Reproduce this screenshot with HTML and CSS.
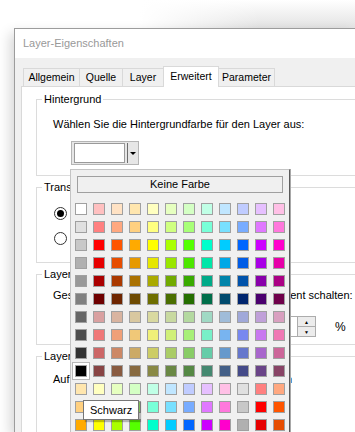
FILE: index.html
```html
<!DOCTYPE html>
<html lang="de">
<head>
    <meta charset="UTF-8">
    <meta name="viewport" content="width=device-width, initial-scale=1.0">
    <title>Layer-Eigenschaften</title>
    <link rel="stylesheet" href="styles.css">
</head>
<body>
    <div class="desk">
        <div class="window">
            <div class="titlebar">Layer-Eigenschaften</div>
            <div class="client">
                <div class="tabs">
                    <div class="tab">Allgemein</div>
                    <div class="tab">Quelle</div>
                    <div class="tab">Layer</div>
                    <div class="tab active">Erweitert</div>
                    <div class="tab">Parameter</div>
                </div>
                <div class="panel">
                    <fieldset class="group group-bg">
                        <legend>Hintergrund</legend>
                        <p>Wählen Sie die Hintergrundfarbe für den Layer aus:</p>
                        <div class="combo">
                            <span class="combo-value"></span>
                            <span class="combo-sep"></span>
                            <span class="combo-arrow"></span>
                        </div>
                    </fieldset>

                    <fieldset class="group group-trans">
                        <legend>Transparenz</legend>
                        <label class="radio-row"><span class="radio checked"></span>Keine Transparenz</label>
                        <label class="radio-row"><span class="radio"></span>Transparente Farbe verwenden</label>
                    </fieldset>

                    <fieldset class="group group-fade">
                        <legend>Layer-Transparenz</legend>
                        <p>Gesamte Transparenz aller Layer-Inhalte in Prozent schalten:</p>
                        <div class="spin-row">
                            <div class="numbox">
                                <span class="num-value">0</span>
                                <span class="spin">
                                    <span class="spin-btn">&#9650;</span>
                                    <span class="spin-btn">&#9660;</span>
                                </span>
                            </div>
                            <span class="unit">%</span>
                        </div>
                    </fieldset>

                    <fieldset class="group group-view">
                        <legend>Layer-Anzeige</legend>
                        <p>Auf der Übersichtskarte standardmäßig anzeigen</p>
                    </fieldset>
                </div>
            </div>
        </div>
    </div>

    <div class="popup">
        <div class="no-color">Keine Farbe</div>
        <div id="colorGrid" class="color-grid"></div>
    </div>

    <div class="tooltip">Schwarz</div>

    <script>
        // Colour table of the drop-down, one array per row
        const palette = [
            ['#ffffff', '#ffc0c0', '#ffe2c4', '#ffe6ae', '#ffffc0', '#e6ffc0', '#d4ffc4', '#c0ffe6', '#c0e6ff', '#c0ccff', '#e6c0ff', '#ffc0e6'],
            ['#e0e0e0', '#ff8080', '#ffa880', '#ffd080', '#ffff80', '#d0ff80', '#a8ff78', '#78ffd8', '#78e0ff', '#78acff', '#e078ff', '#ff78dc'],
            ['#c8c8c8', '#ff0000', '#ff5500', '#ffaa00', '#ffff00', '#aaff00', '#55ff00', '#00ffcc', '#00ccff', '#0066ff', '#cc00ff', '#ff00cc'],
            ['#b0b0b0', '#e60000', '#e64d00', '#e69900', '#e6e600', '#99e600', '#4de600', '#00e6a8', '#00a8e6', '#005ce6', '#a800e6', '#e600a8'],
            ['#999999', '#aa0000', '#aa3900', '#aa7100', '#aaaa00', '#71aa00', '#39aa00', '#00aa88', '#0084aa', '#0052aa', '#8800aa', '#aa0084'],
            ['#808080', '#6e0000', '#6e2500', '#6e4a00', '#6e6e00', '#4a6e00', '#256e00', '#006e4a', '#004a6e', '#00256e', '#4a006e', '#6e004a'],
            ['#666666', '#d9a0a0', '#d9b4a0', '#d9c8a0', '#d9d9a0', '#c8d9a0', '#b4d9a0', '#a0d9c4', '#a0bcd9', '#a0a8d9', '#c0a0d9', '#d9a0c0'],
            ['#4d4d4d', '#f07878', '#f0a078', '#f0c878', '#f0f078', '#d0f078', '#a8f078', '#78f0c8', '#78b4f0', '#7888f0', '#c878f0', '#f078b4'],
            ['#333333', '#cc6666', '#cc8866', '#ccaa66', '#cccc66', '#aacc66', '#88cc66', '#66cca8', '#6699cc', '#6677cc', '#a866cc', '#cc6699'],
            ['#000000', '#884444', '#885a40', '#886a40', '#888844', '#6a8844', '#558844', '#448870', '#446088', '#444a88', '#6a4488', '#884466']
        ];

        // The last rows repeat the table, shifted by three fields
        const flat = palette.flat();
        const rows = palette.concat([0, 1, 2].map(r => flat.slice(r * 12 + 3, r * 12 + 15)));

        const colorGrid = document.getElementById('colorGrid');
        rows.forEach(row => {
            row.forEach(color => {
                const cell = document.createElement('span');
                cell.className = 'swatch';
                cell.style.background = color;
                if (color === '#000000') {
                    cell.classList.add('hover');
                }
                colorGrid.appendChild(cell);
            });
        });
    </script>
</body>
</html>
```

FILE: styles.css
```css
body {
    margin: 0;
    width: 355px;
    height: 432px;
    overflow: hidden;
    position: relative;
    font-family: "Liberation Sans", Arial, sans-serif;
    font-size: 11px;
    color: #000;
    background-color: #fff;
    background-image:
        linear-gradient(to right, #fff 140px, rgba(255, 255, 255, 0) 260px),
        linear-gradient(to bottom, #fff 0, #e4e4e4 27px);
    background-size: 100% 28px, 100% 28px;
    background-repeat: no-repeat;
}

.desk {
    padding: 28px 0 0 14px;
}

/* the dialog runs on past the right and bottom edge of the shot */
.window {
    box-sizing: border-box;
    width: 341px;
    height: 404px;
    overflow: hidden;
    border: 1px solid #9c9c9c;
    border-right: none;
    border-bottom: none;
    background-color: #f0f0f0;
    box-shadow: -4px 5px 12px rgba(0, 0, 0, 0.16);
}

.titlebar {
    height: 29px;
    line-height: 29px;
    padding-left: 8px;
    background-color: #fff;
    color: #999;
}

.client {
    padding: 8px 0 0 6px;
}

/* tab strip */

.tabs {
    display: flex;
    align-items: flex-end;
    height: 20px;
    padding-left: 2px;
}

.tab {
    box-sizing: border-box;
    height: 18px;
    line-height: 17px;
    margin-left: -1px;
    border: 1px solid #d9d9d9;
    border-bottom: none;
    text-align: center;
    font-size: 10.5px;
}

.tab:nth-child(1) { width: 57px; margin-left: 0; }
.tab:nth-child(2) { width: 44px; }
.tab:nth-child(3) { width: 42px; }
.tab:nth-child(4) { width: 56px; }
.tab:nth-child(5) { width: 57px; }

.tab.active {
    height: 21px;
    line-height: 19px;
    margin-bottom: -1px;
    background-color: #fff;
    position: relative;
    z-index: 1;
}

.panel {
    height: 400px;
    padding: 5px 0 0 14px;
    border: 1px solid #d9d9d9;
    border-right: none;
    background-color: #fff;
}

/* group boxes */

.group {
    margin: 0;
    min-width: 0;
    padding: 11px 0 10px 16px;
    border: 1px solid #dcdcdc;
    border-right: none;
}

.group + .group {
    margin-top: 4px;
}

.group legend {
    padding: 0 2px;
    margin-left: -11px;
    line-height: 14px;
}

.group p {
    margin: 0;
    line-height: 14px;
    white-space: nowrap;
}

.group-trans {
    padding-top: 12px;
    padding-bottom: 17px;
}

.group-fade {
    padding-top: 7px;
    padding-bottom: 7px;
}

.group-view {
    padding-top: 9px;
    height: 80px;
}

/* colour combo */

.combo {
    display: flex;
    align-items: stretch;
    box-sizing: border-box;
    width: 68px;
    height: 24px;
    margin: 10px 0 0 18px;
    padding: 1px 0 1px 2px;
    border: 1px solid #b4b4b4;
    background-color: #e6e6e6;
}

.combo-value {
    width: 51px;
    box-sizing: border-box;
    border: 1px solid #9a9a9a;
    background-color: #fff;
}

.combo-sep {
    width: 1px;
    margin-left: 2px;
    background-color: #6d6d6d;
}

.combo-arrow {
    flex: 1;
    display: flex;
    align-items: center;
    justify-content: center;
}

.combo-arrow::after {
    content: "";
    border-left: 3px solid transparent;
    border-right: 3px solid transparent;
    border-top: 3px solid #000;
}

/* radio buttons */

.radio-row {
    display: flex;
    align-items: center;
    height: 14px;
    margin-left: 1px;
    white-space: nowrap;
}

.radio-row + .radio-row {
    margin-top: 11px;
}

.radio {
    box-sizing: border-box;
    width: 13px;
    height: 13px;
    margin-right: 5px;
    border: 1px solid #333;
    border-radius: 50%;
    display: flex;
    align-items: center;
    justify-content: center;
}

.radio.checked::after {
    content: "";
    width: 7px;
    height: 7px;
    border-radius: 50%;
    background-color: #000;
}

/* spinner */

.spin-row {
    display: flex;
    align-items: center;
    height: 21px;
    margin-top: 14px;
}

.numbox {
    display: flex;
    flex-shrink: 0;
    box-sizing: border-box;
    width: 66px;
    height: 21px;
    margin-left: 197px;
    border: 1px solid #acacac;
}

.num-value {
    flex: 1;
    padding-left: 3px;
    line-height: 19px;
}

.spin {
    display: flex;
    flex-direction: column;
    width: 17px;
    border-left: 1px solid #acacac;
}

.spin-btn {
    flex: 1;
    display: flex;
    align-items: center;
    justify-content: center;
    font-size: 5px;
    background-color: #ececec;
}

.spin-btn + .spin-btn {
    border-top: 1px solid #acacac;
}

.unit {
    margin-left: 19px;
    font-size: 12px;
}

/* colour drop-down */

.popup {
    position: absolute;
    left: 70px;
    top: 169px;
    width: 218px;
    height: 257px;
    padding-top: 6px;
    border: 1px solid #c4c4c4;
    border-right-color: #5a5a5a;
    border-bottom: none;
    background-color: #f0f0f0;
    box-shadow: 1px 0 0 #a8a8a8;
}

.no-color {
    box-sizing: border-box;
    height: 17px;
    margin: 0 6px;
    line-height: 15px;
    text-align: center;
    border: 1px solid #a0a0a0;
    background-color: #f0f0f0;
}

.color-grid {
    display: grid;
    grid-template-columns: repeat(12, 12px);
    grid-auto-rows: 12px;
    gap: 6px;
    padding: 10px 4px 0;
}

.swatch {
    box-sizing: border-box;
    border: 1px solid #a0a0a0;
}

.swatch.hover {
    box-shadow: 0 0 0 2px #fff, 0 0 0 3px #b8b8b8;
}

.tooltip {
    position: absolute;
    left: 83px;
    top: 400px;
    padding: 0 6px;
    line-height: 18px;
    font-size: 11px;
    border: 1px solid #767676;
    background-color: #fff;
    box-shadow: 2px 2px 1px rgba(0, 0, 0, 0.25);
}
```
